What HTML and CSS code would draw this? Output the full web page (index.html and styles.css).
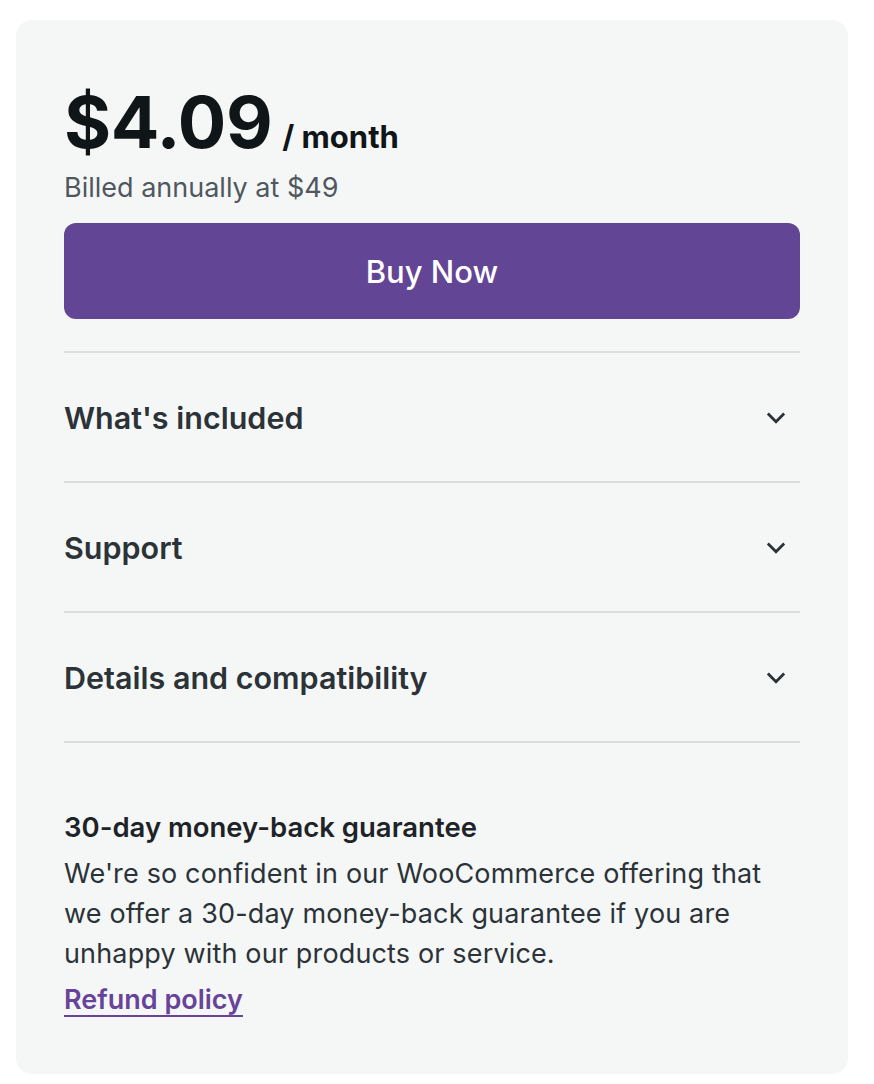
FILE: index.html
```html
<!DOCTYPE html>
<html lang="en">
<head>
  <meta charset="UTF-8" />
  <meta name="viewport" content="width=device-width, initial-scale=1.0"/>
  <title>Pricing</title>
  <link rel="stylesheet" href="styles.css">
</head>
<body>
  <div class="price-card">
    <div class="price-line">
      <span class="price">$4.09</span>
      <span class="period">/ month</span>
    </div>
    <div class="billed">Billed annually at $49</div>

    <button class="buy-btn">Buy Now</button>

    <div class="accordion">
      <div class="acc-row">
        <span>What's included</span>
        <svg class="chevron" viewBox="0 0 24 24"><path d="M5 9l7 7 7-7" /></svg>
      </div>
      <div class="acc-row">
        <span>Support</span>
        <svg class="chevron" viewBox="0 0 24 24"><path d="M5 9l7 7 7-7" /></svg>
      </div>
      <div class="acc-row">
        <span>Details and compatibility</span>
        <svg class="chevron" viewBox="0 0 24 24"><path d="M5 9l7 7 7-7" /></svg>
      </div>
    </div>

    <div class="guarantee">
      <h4>30-day money-back guarantee</h4>
      <p>We're so confident in our WooCommerce offering that we offer a 30-day money-back guarantee if you are unhappy with our products or service.</p>
      <a href="#">Refund policy</a>
    </div>
  </div>
</body>
</html>
```

FILE: styles.css
```css
body {
  font-family: Inter, 'Noto Sans', sans-serif;
  margin: 0;
  padding: 20px 26px 9px 16px;
  background: #fff;
  color: #2c3338;
}

.price-card {
  background: #f5f7f7;
  border-radius: 16px;
  padding: 60px 48px 58px;
}

.price-line {
  display: flex;
  align-items: baseline;
  gap: 10px;
  color: #101517;
}

.price {
  font-size: 72px;
  font-weight: 700;
  letter-spacing: -0.5px;
  line-height: 84px;
}

.period {
  font-size: 31px;
  font-weight: 700;
}

.billed {
  font-size: 27px;
  color: #50575e;
  margin-top: 7px;
}

.buy-btn {
  display: block;
  width: 100%;
  height: 96px;
  margin-top: 19px;
  border: none;
  border-radius: 12px;
  background: #624594;
  color: #fff;
  font-family: inherit;
  font-size: 31px;
  font-weight: 500;
}

.accordion {
  margin-top: 32px;
  border-top: 2px solid #dcdcde;
}

.acc-row {
  display: flex;
  align-items: center;
  justify-content: space-between;
  height: 128px;
  border-bottom: 2px solid #dcdcde;
  font-size: 30.5px;
  font-weight: 600;
  color: #2c3338;
}

.chevron {
  width: 28px;
  height: 28px;
  margin-right: 10px;
  fill: none;
  stroke: #2c3338;
  stroke-width: 2.4;
}

.guarantee {
  margin-top: 67px;
}

.guarantee h4 {
  margin: 0 0 10px;
  font-size: 27.5px;
  font-weight: 600;
  color: #1d2327;
}

.guarantee p {
  margin: 0;
  font-size: 27px;
  line-height: 40px;
  letter-spacing: 0.15px;
  color: #2c3338;
}

.guarantee a {
  display: inline-block;
  margin-top: 9px;
  font-size: 27px;
  font-weight: 600;
  color: #674399;
  text-underline-offset: 6px;
  text-decoration-thickness: 2px;
}
```
